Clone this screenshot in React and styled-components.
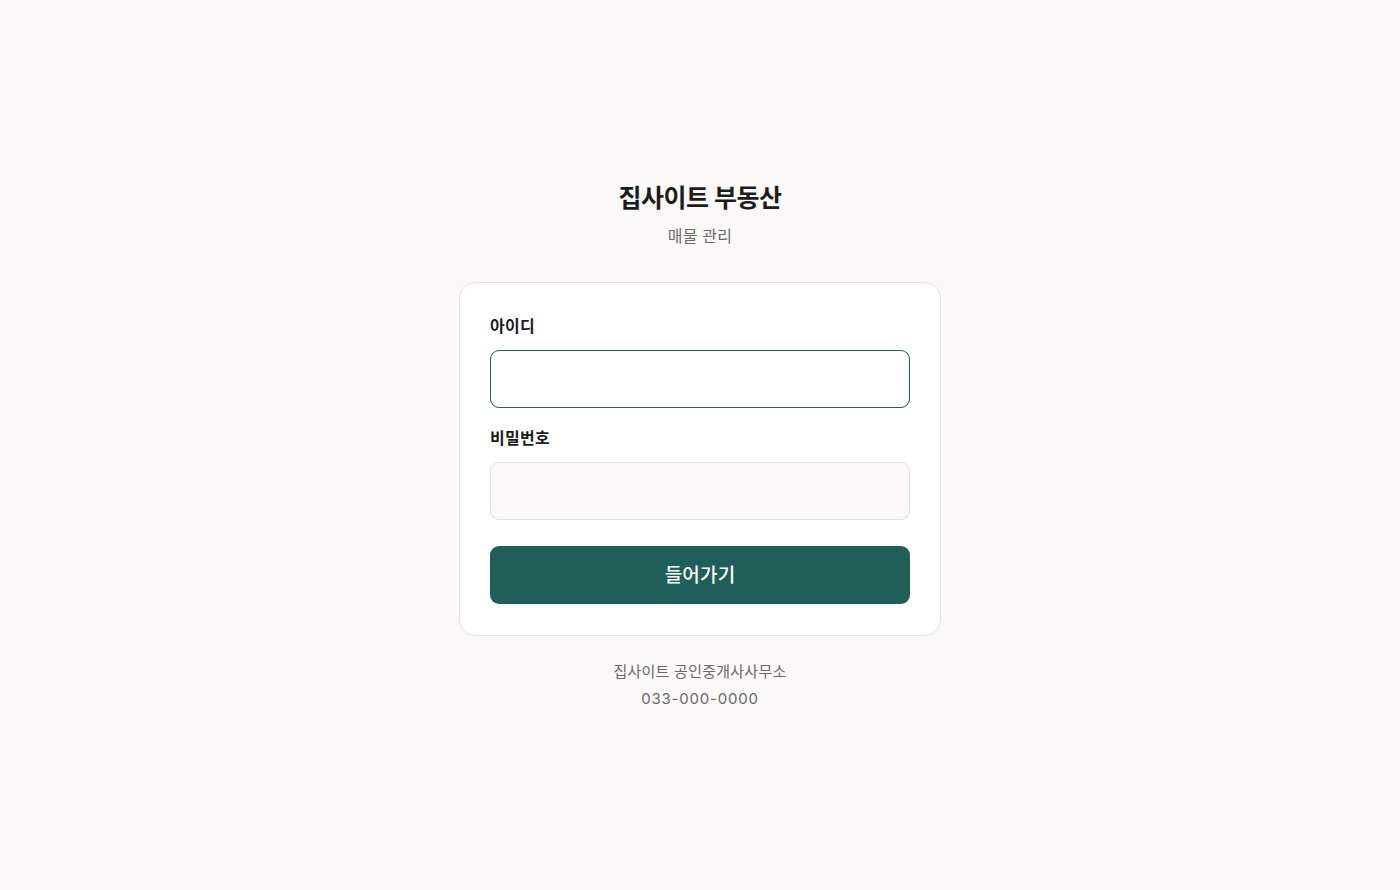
import React, { useState } from 'react';
import styled, { createGlobalStyle } from 'styled-components';

const GlobalStyle = createGlobalStyle`
  * { box-sizing: border-box; }
  html, body {
    margin: 0;
    padding: 0;
    background: #faf9f7;
    font-family: "Inter", "Noto Sans CJK KR", sans-serif;
    color: #1c1c1c;
  }
`;

const Page = styled.main`
  min-height: 100vh;
  padding-top: 2px;
  display: flex;
  flex-direction: column;
  align-items: center;
  justify-content: center;
`;

const Header = styled.header`
  display: flex;
  flex-direction: column;
  align-items: center;
  margin-bottom: 34px;
  h1 {
    margin: 0;
    font-size: 25px;
    line-height: 34px;
    font-weight: 700;
    letter-spacing: -0.5px;
    color: #1c1c1c;
  }
  p {
    margin: 9px 0 0;
    font-size: 16px;
    line-height: 24px;
    letter-spacing: 0.2px;
    color: #6b6966;
  }
`;

const Card = styled.form`
  width: 482px;
  padding: 31px 30px;
  background: #ffffff;
  border: 1px solid #e4e1dc;
  border-radius: 16px;
  display: flex;
  flex-direction: column;
`;

const Field = styled.div`
  display: flex;
  flex-direction: column;
  gap: 12px;
  margin-bottom: ${(props) => props.$gap}px;
`;

const Label = styled.label`
  font-size: 16px;
  line-height: 24px;
  font-weight: 600;
  letter-spacing: 0.3px;
  color: #1c1c1c;
`;

const Input = styled.input`
  width: 100%;
  height: 58px;
  padding: 0 16px;
  font-size: 16px;
  font-family: inherit;
  border-radius: 9px;
  outline: none;
  border: 1px solid ${(props) => (props.$active ? '#1f5f58' : '#e3e0db')};
  background: ${(props) => (props.$active ? '#ffffff' : '#faf9f7')};
`;

const Submit = styled.button`
  height: 58px;
  padding: 0 0 3px;
  border: 0;
  border-radius: 9px;
  background: #1f5f58;
  color: #ffffff;
  font-family: inherit;
  font-size: 19px;
  font-weight: 500;
  letter-spacing: 0.2px;
  cursor: pointer;
`;

const Footer = styled.footer`
  margin-top: 22px;
  display: flex;
  flex-direction: column;
  align-items: center;
  font-size: 15px;
  line-height: 27px;
  color: #6b6966;
  span:first-child {
    letter-spacing: 0.25px;
  }
  span:last-child {
    letter-spacing: 0.8px;
  }
`;

const App = () => {
  const [focus, setFocus] = useState('id');

  return (
    <>
      <GlobalStyle />
      <Page>
        <Header>
          <h1>집사이트 부동산</h1>
          <p>매물 관리</p>
        </Header>

        <Card onSubmit={(e) => e.preventDefault()}>
          <Field $gap={18}>
            <Label htmlFor="id">아이디</Label>
            <Input id="id" type="text" $active={focus === 'id'} onFocus={() => setFocus('id')} />
          </Field>
          <Field $gap={26}>
            <Label htmlFor="pw">비밀번호</Label>
            <Input id="pw" type="password" $active={focus === 'pw'} onFocus={() => setFocus('pw')} />
          </Field>
          <Submit type="submit">들어가기</Submit>
        </Card>

        <Footer>
          <span>집사이트 공인중개사사무소</span>
          <span>033-000-0000</span>
        </Footer>
      </Page>
    </>
  );
};

export default App;
